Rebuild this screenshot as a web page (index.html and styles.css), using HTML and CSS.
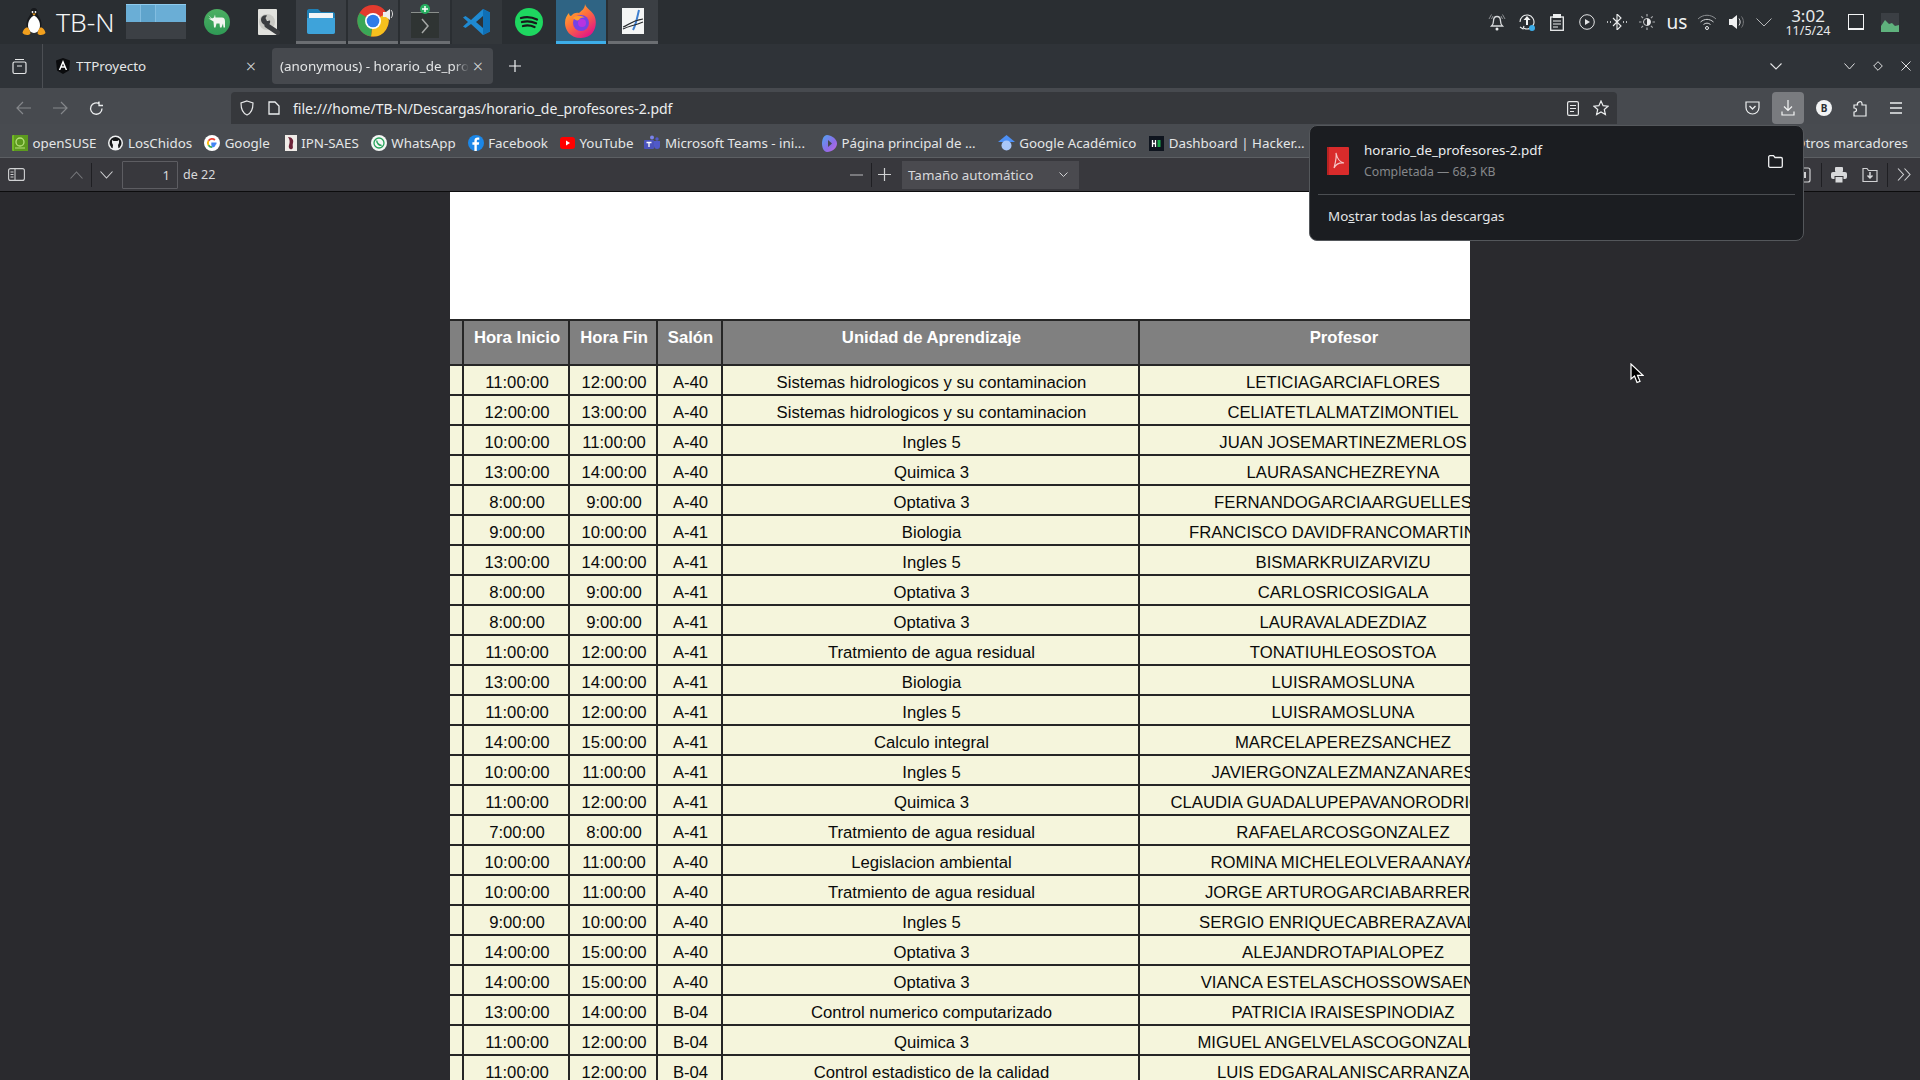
FILE: index.html
```html
<!DOCTYPE html>
<html lang="es">
<head>
<meta charset="utf-8">
<title>horario_de_profesores-2.pdf</title>
<link rel="stylesheet" href="styles.css">
</head>
<body>
<div class="screen">
  <header class="taskbar">
    <div class="launcher">
      <svg width="24" height="30" viewBox="0 0 24 30"><path d="M12 1C9.500 1 8.300 3 8.500 5.500c.1 2-.8 3-2.300 5.500C4.500 14 4 17.500 5 20.500h14c1-3 .5-6.500-1.200-9.500-1.500-2.500-2.400-3.500-2.300-5.500C15.700 3 14.500 1 12 1z" fill="#17191c"/><path d="M12 8.500c-3.300 1.500-6 5.500-6 10 0 3.800 2.500 7.500 6 7.500s6-3.700 6-7.500c0-4.500-2.700-8.500-6-10z" fill="#fff"/><circle cx="10.500" cy="5" r=".9" fill="#fff"/><circle cx="13.500" cy="5" r=".9" fill="#fff"/><path d="M10 6.500h4l-2 2z" fill="#f2a01e"/><path d="M.5 26c.5-3 3-6 5-5.500 1.500.5 2.500 3.500 3 6-2 2.500-6.500 1.500-8-.5zM23.500 26c-.5-3-3-6-5-5.500-1.500.5-2.500 3.500-3 6 2 2.500 6.500 1.500 8-.5z" fill="#f2a01e"/></svg>
      <span class="launcher-name">TB-N</span>
    </div>
    <div class="pager">
      <div class="pager-top"><i class="desk d1"></i><i class="desk d2"></i><i class="desk d3"></i></div>
      <div class="pager-bottom"></div>
    </div>
    <div class="task-list">
      <div class="task">
        <svg width="26" height="26" viewBox="0 0 26 26"><defs><linearGradient id="mn" x1="0" y1="0" x2="0" y2="1"><stop offset="0" stop-color="#4caf62"/><stop offset="1" stop-color="#2f9a55"/></linearGradient></defs><circle cx="13" cy="13" r="13" fill="url(#mn)"/><path d="M4 6l4 3.500 2-1 1-3 .5 3H18c2 0 3 1.500 3 4v6h-1.500l-.5-4-1.500 4H16l-.5-4h-3l-1 4H10l-.5-6L7 11 4.500 9.500 7 9.500z" fill="#f1f5f0"/></svg>
      </div>
      <div class="task">
        <svg width="26" height="28" viewBox="0 0 26 28"><rect x="2" y="1" width="19" height="26" rx="1" fill="#e2e2de"/><circle cx="11" cy="14" r="8" fill="#c9c9c4"/><circle cx="11" cy="14" r="2" fill="#e8e8e5"/><path d="M11 17.500L21.500 24.500" stroke="#3b3d40" stroke-width="5" stroke-linecap="round"/><path d="M5 11.500c0 3.500 3 6 6.500 5.500 2.500-.5 3-2.500 2.500-4.500l-3 .5-1.500-3 1.500-2.500c-3-1-6 1-6 4z" fill="#3b3d40"/></svg>
      </div>
      <div class="task tile">
        <svg width="30" height="26" viewBox="0 0 30 26"><path d="M1 3c0-1 1-2 2-2h9l3 3h12c1 0 2 1 2 2v18c0 1-1 2-2 2H3c-1 0-2-1-2-2z" fill="#1f7fb4"/><rect x="3" y="5" width="24" height="6" fill="#f2f5f7"/><path d="M1 10h28v14c0 1-1 2-2 2H3c-1 0-2-1-2-2z" fill="#3ea3da"/></svg>
      </div>
      <div class="task tile">
        <svg class="chrome" width="38" height="32" viewBox="0 0 38 32"><circle cx="16" cy="16" r="15.500" fill="#e33b2e"/><path d="M16 16L29.500 8.200A15.500 15.500 0 0 1 14 31.400z" fill="#f6c01e"/><path d="M16 16L14 31.400A15.500 15.500 0 0 1 2.500 8z" fill="#3aa757"/><path d="M2.500 8A15.500 15.500 0 0 1 29.500 8L16 8z" fill="#e33b2e"/><circle cx="16" cy="16" r="8" fill="#fff"/><circle cx="16" cy="16" r="6.300" fill="#2f7be8"/><path d="M26 7h3l4-3v11l-4-3h-3z" fill="#eee"/><path d="M34 5c2 2 2 6 0 8" fill="none" stroke="#ddd"/></svg>
      </div>
      <div class="task tile">
        <svg class="term" width="30" height="34" viewBox="0 0 30 34"><rect x="1" y="8" width="28" height="28" fill="#2f3433"/><rect x="1" y="8" width="28" height="1" fill="#8a8f8c"/><path d="M12 15l6 7-6 7" fill="none" stroke="#a5a8a6" stroke-width="1.500"/><circle cx="15" cy="5" r="5" fill="#27ae60"/><path d="M15 2v6M12 5h6" stroke="#fff" stroke-width="1.500"/></svg>
      </div>
      <div class="task tile-plain">
        <svg width="28" height="28" viewBox="0 0 28 28"><path d="M20 1l7 3.500v19L20 27 8 16l-5.500 4L0 18.500 5 14 0 9.500 2.500 8 8 12z" fill="#1f8ad2"/><path d="M20 8l-7 6 7 6z" fill="#2e3236"/><path d="M20 1l7 3.500v19L20 27z" fill="#0f6fb5"/></svg>
      </div>
      <div class="task">
        <svg width="28" height="28" viewBox="0 0 28 28"><circle cx="14" cy="14" r="14" fill="#1ed760"/><path d="M6 10c5-1.500 11-1 16 1.500M7 14c4.500-1.200 9.500-.8 14 1.300M8 18c4-1 8-.6 11.500 1" fill="none" stroke="#17191b" stroke-width="2.300" stroke-linecap="round"/></svg>
      </div>
      <div class="task tile-active">
        <svg width="32" height="34" viewBox="0 0 32 34"><defs><linearGradient id="fx" x1="0" y1="0" x2="0.700" y2="1"><stop offset="0" stop-color="#ffc62c"/><stop offset=".5" stop-color="#ff7139"/><stop offset="1" stop-color="#e31587"/></linearGradient></defs><path d="M20 0c1 4 6 6 9 11 4 7 2 23-13 23C5 34 0 26 0 19c0-5 2-8 4-10 0 2 1 3 2 3 2-3 6-4 8-3 2-2 6-4 6-9z" fill="url(#fx)"/><circle cx="16" cy="19" r="8" fill="#7542e5"/><path d="M8 14c3-3 9-3 12 0-3-1-5 0-6 2-2 1-4 0-6-2z" fill="#ff9a2e"/><circle cx="17" cy="19" r="4" fill="#b833e1"/></svg>
      </div>
      <div class="task tile">
        <svg width="22" height="26" viewBox="0 0 22 26"><rect width="22" height="26" fill="#f4f5f5"/><path d="M11 22c3-5 4-12 6-20" fill="none" stroke="#3f7fd0" stroke-width="2"/><path d="M1 19c5-1 7-6 20-8M1 21c6-3 10-3 20-7" fill="none" stroke="#26292c" stroke-width="1.200"/></svg>
      </div>
    </div>
    <div class="tray">
      <div class="tray-item"><svg width="18" height="18" viewBox="0 0 18 18"><path d="M9 3.500c2.500 0 3.500 2 3.500 4.500 0 3 1 4 2 5h-11c1-1 2-2 2-5 0-2.500 1-4.500 3.500-4.500z" fill="none" stroke="#d8dadc" stroke-width="1.300"/><circle cx="9" cy="16" r="1.500" fill="#e8e9ea"/><path d="M1 6l2.500-4.500M17 6l-2.500-4.500M3.500 6L5 3M14.500 6L13 3" stroke="#8c8f92"/></svg></div>
      <div class="tray-item"><svg width="18" height="18" viewBox="0 0 18 18"><path d="M2 9a7 7 0 1 1 4 6.300M2 14l3 2 1-3" fill="none" stroke="#eceeef" stroke-width="1.100"/><path d="M9 3L5.500 7H8v5h2V7h2.500z" fill="#f4f5f5"/><circle cx="14" cy="15" r="3" fill="#3daee9"/></svg></div>
      <div class="tray-item"><svg width="14" height="17" viewBox="0 0 14 17"><rect x=".7" y="3" width="12.600" height="13.300" fill="none" stroke="#eceeef" stroke-width="1.300"/><rect x="3" y="0" width="8" height="4" fill="#eceeef"/><path d="M3 7h8M3 10h8M3 13h5" stroke="#eceeef"/></svg></div>
      <div class="tray-item"><svg width="16" height="16" viewBox="0 0 16 16"><circle cx="8" cy="8" r="7.300" fill="none" stroke="#e4e5e6"/><path d="M6 5l5 3-5 3z" fill="#e4e5e6"/></svg></div>
      <div class="tray-item"><svg width="22" height="16" viewBox="0 0 22 16"><path d="M7 4l8 8-4 4V0l4 4-8 8" fill="none" stroke="#eceeef" stroke-width="1.100"/><path d="M1 8h1M4 8h1M17 8h1M20 8h1" stroke="#eceeef" stroke-width="1.300"/></svg></div>
      <div class="tray-item"><svg width="16" height="16" viewBox="0 0 16 16"><circle cx="8" cy="8" r="3.500" fill="#2b2e32" stroke="#d0d2d4"/><path d="M8 4.500a3.500 3.500 0 0 1 0 7z" fill="#e8e9ea"/><path d="M8 0v2.500M8 13.500V16M0 8h2.500M13.500 8H16M2.300 2.300l1.800 1.800M11.900 11.900l1.800 1.800M2.300 13.700l1.800-1.800M11.900 4.100l1.800-1.800" stroke="#a8aaad" stroke-width="1.200"/></svg></div>
      <div class="tray-item tray-lang">us</div>
      <div class="tray-item"><svg width="20" height="16" viewBox="0 0 20 16"><path d="M1 5c5-5 13-5 18 0" fill="none" stroke="#8c8f92"/><path d="M3.500 8c4-3.500 9-3.500 13 0M6.500 10.500c2-1.800 5-1.800 7 0" fill="none" stroke="#d0d2d4"/><circle cx="10" cy="14" r="1.500" fill="none" stroke="#eceeef"/></svg></div>
      <div class="tray-item"><svg width="18" height="16" viewBox="0 0 18 16"><path d="M1 5h3l5-4v14l-5-4H1z" fill="#f0f1f2"/><path d="M11 4.500c1.500 2 1.500 5 0 7" fill="none" stroke="#d8dadc"/><path d="M13.500 2.500c2.500 3 2.500 8 0 11" fill="none" stroke="#77797c"/></svg></div>
      <div class="tray-item tray-more"><svg width="16" height="9" viewBox="0 0 16 9"><path d="M.5.500L8 8 15.500.500" fill="none" stroke="#b5b7b9"/></svg></div>
      <div class="clock"><span class="clock-time">3:02</span><span class="clock-date">11/5/24</span></div>
      <div class="desktop-btn"><span class="desktop-shape"></span></div>
      <div class="graph"><svg width="18" height="19" viewBox="0 0 18 19"><rect width="18" height="19" fill="#3b3f44"/><path d="M0 19V13l4-6 4 4 3-1 3 3 4-1v7z" fill="#5fb27d"/></svg></div>
    </div>
  </header>

  <div class="tabbar">
    <div class="tab-view"><svg width="15" height="17" viewBox="0 0 15 17"><path d="M3 1.500h9M2.500 4h10c.8 0 1.500.7 1.500 1.500v8.500c0 .8-.7 1.500-1.500 1.500h-10c-.8 0-1.500-.7-1.500-1.500V5.500C1 4.700 1.700 4 2.500 4zM5 8h5" fill="none" stroke="#e6e7e8" stroke-width="1.200"/></svg></div>
    <div class="tab">
      <svg width="14" height="16" viewBox="0 0 14 16"><path d="M7 0L0 2.500l1 10L7 16l6-3.500 1-10z" fill="#0b0c0e"/><path d="M7 2L2.800 12h1.600l.9-2.300h3.400l.9 2.300h1.600zM6 8.300L7 5.700l1 2.600z" fill="#fff"/></svg>
      <span class="tab-title">TTProyecto</span>
      <span class="tab-close">×</span>
    </div>
    <div class="tab tab-active">
      <span class="tab-title tab-fade">(anonymous) - horario_de_profesores-2.pdf</span>
      <span class="tab-close">×</span>
    </div>
    <div class="tab-new"><svg width="12" height="12" viewBox="0 0 12 12"><path d="M6 0v12M0 6h12" stroke="#f1f2f3" stroke-width="1.200"/></svg></div>
    <div class="tab-actions">
      <svg class="all-tabs" width="12" height="7" viewBox="0 0 12 7"><path d="M.5.500L6 6 11.500.500" fill="none" stroke="#e6e7e8" stroke-width="1.100"/></svg>
      <svg class="win-min" width="11" height="7" viewBox="0 0 11 7"><path d="M.5.500L5.500 6l5-5.500" fill="none" stroke="#e0e1e2"/></svg>
      <svg class="win-max" width="10" height="10" viewBox="0 0 10 10"><path d="M5 .7L9.300 5 5 9.300.7 5z" fill="none" stroke="#e0e1e2"/></svg>
      <svg class="win-close" width="10" height="10" viewBox="0 0 10 10"><path d="M.5.500l9 9M9.500.500l-9 9" stroke="#e0e1e2"/></svg>
    </div>
  </div>

  <nav class="navbar">
    <div class="nav-btn"><svg width="16" height="14" viewBox="0 0 16 14"><path d="M15 7H1M7 1L1 7l6 6" fill="none" stroke="#85878b" stroke-width="1.200"/></svg></div>
    <div class="nav-btn"><svg width="16" height="14" viewBox="0 0 16 14"><path d="M1 7h14M9 1l6 6-6 6" fill="none" stroke="#85878b" stroke-width="1.200"/></svg></div>
    <div class="nav-btn"><svg width="15" height="15" viewBox="0 0 15 15"><path d="M13 7.500A5.700 5.700 0 1 1 10.500 2.800M10 .5v4h4" fill="none" stroke="#eceeef" stroke-width="1.300"/></svg></div>
    <div class="address">
      <svg class="addr-shield" width="14" height="16" viewBox="0 0 14 16"><path d="M7 1l6 2c0 6-1 10-6 12C2 13 1 9 1 3z" fill="none" stroke="#e6e7e8" stroke-width="1.200"/></svg>
      <svg class="addr-page" width="12" height="14" viewBox="0 0 12 14"><path d="M1 1h6l4 4v8H1z" fill="none" stroke="#eceeef" stroke-width="1.300"/></svg>
      <span class="url">file:///home/TB-N/Descargas/horario_de_profesores-2.pdf</span>
      <svg class="addr-reader" width="12" height="15" viewBox="0 0 12 15"><rect x=".6" y=".6" width="10.800" height="13.800" rx="1.500" fill="none" stroke="#e6e7e8" stroke-width="1.200"/><path d="M3 4.500h6M3 7.500h6M3 10.500h4" stroke="#e6e7e8"/></svg>
      <svg class="addr-star" width="16" height="16" viewBox="0 0 16 16"><path d="M8 1l2.100 4.700 5 .5-3.800 3.300 1.100 5L8 12l-4.400 2.500 1.100-5L.9 6.200l5-.5z" fill="none" stroke="#eceeef" stroke-width="1.200"/></svg>
    </div>
    <div class="nav-right">
      <div class="nav-btn"><svg width="15" height="14" viewBox="0 0 15 14"><path d="M1 1h13v5.500a6.500 6.500 0 0 1-13 0z" fill="none" stroke="#eceeef" stroke-width="1.200"/><path d="M4.500 5l3 3 3-3" fill="none" stroke="#eceeef" stroke-width="1.300"/></svg></div>
      <div class="nav-btn nav-btn-on"><svg width="14" height="16" viewBox="0 0 14 16"><path d="M7 0v10M3 6.500L7 10.500l4-4M1 11.500v3.500h12v-3.500" fill="none" stroke="#f4f5f5" stroke-width="1.200"/></svg></div>
      <div class="nav-btn"><span class="ext-b">B</span></div>
      <div class="nav-btn"><svg width="14" height="17" viewBox="0 0 14 17"><path d="M1 5h3.500c-1-3 4-5 4.500-1.500V5h4v11H1v-4c2 0 2.500-1 2.500-2S3 8 1 8z" fill="none" stroke="#eceeef" stroke-width="1.200"/></svg></div>
      <div class="nav-btn"><svg width="14" height="12" viewBox="0 0 14 12"><path d="M1 1h12M1 6h12M1 11h12" stroke="#eceeef" stroke-width="1.300"/></svg></div>
    </div>
  </nav>

  <div class="bookmarks">
    <a class="bm"><svg width="16" height="16" viewBox="0 0 16 16"><rect width="16" height="16" rx="1" fill="#73ba25"/><path d="M2 0h14v16H2z" fill="#5c9a1e"/><circle cx="8" cy="7" r="4" fill="none" stroke="#b5e07a" stroke-width="1.300"/><path d="M3 13h10" stroke="#b5e07a"/></svg><span>openSUSE</span></a>
    <a class="bm bm-chidos"><svg width="15" height="16" viewBox="0 0 15 16"><circle cx="7.500" cy="8" r="7.500" fill="#eef0f1"/><circle cx="7.500" cy="8" r="6" fill="#16181a"/><path d="M4 5l1.500 1h4L11 5v3l-1 2 .5 4H4.500L5 10 4 8z" fill="#eef0f1"/></svg><span>LosChidos</span></a>
    <a class="bm bm-google"><svg width="16" height="16" viewBox="0 0 16 16"><circle cx="8" cy="8" r="8" fill="#fff"/><path d="M12.500 8.300H8.200v1.500h2.600c-.4 1.200-1.400 1.900-2.700 1.900" fill="none" stroke="#4285f4" stroke-width="1.800"/><path d="M4.500 5.800A4.200 4.200 0 0 1 10.900 5" fill="none" stroke="#ea4335" stroke-width="1.800"/><path d="M4.500 5.800a4.200 4.200 0 0 0 0 4.400" fill="none" stroke="#fbbc05" stroke-width="1.800"/><path d="M4.500 10.200a4.200 4.200 0 0 0 3.600 2" fill="none" stroke="#34a853" stroke-width="1.800"/></svg><span>Google</span></a>
    <a class="bm bm-ipn"><svg width="12" height="16" viewBox="0 0 12 16"><rect width="12" height="16" fill="#f0ece8"/><path d="M3 2c4 0 6 3 5 6s1 5-1 6-4-1-3-4 1-5-1-8z" fill="#6e2439"/></svg><span>IPN-SAES</span></a>
    <a class="bm bm-whats"><svg width="16" height="16" viewBox="0 0 16 16"><circle cx="8" cy="8" r="8" fill="#f5f7f5"/><circle cx="8" cy="8" r="5" fill="none" stroke="#25a35a" stroke-width="1.300"/><path d="M6 5.500c-1 2 2.500 5.500 4.500 4.500" fill="none" stroke="#25a35a" stroke-width="1.500"/></svg><span>WhatsApp</span></a>
    <a class="bm bm-face"><svg width="16" height="16" viewBox="0 0 16 16"><circle cx="8" cy="8" r="8" fill="#1b87e8"/><path d="M8.800 16V9.700h2l.4-2.400H8.800V6c0-.8.300-1.200 1.200-1.200h1.300V2.600C10.800 2.500 10.200 2.500 9.600 2.500 7.700 2.500 6.400 3.700 6.400 5.700v1.600h-2v2.400h2V16z" fill="#fff"/></svg><span>Facebook</span></a>
    <a class="bm bm-yt"><svg width="15" height="12" viewBox="0 0 15 12"><rect width="15" height="12" rx="3" fill="#f00"/><path d="M6 3.500l4 2.500-4 2.500z" fill="#fff"/></svg><span>YouTube</span></a>
    <a class="bm bm-teams"><svg width="16" height="16" viewBox="0 0 16 16"><circle cx="8" cy="2.500" r="2" fill="#7b83eb"/><circle cx="13" cy="4" r="1.700" fill="#5059c9"/><path d="M10 6h6v5c0 2-1 3-3 3-1.500 0-3-1-3-3z" fill="#5059c9"/><rect x="0" y="5" width="10" height="9" rx="1" fill="#4b53bc"/><path d="M2.500 7.500h5M5 7.500V12" stroke="#fff" stroke-width="1.300"/></svg><span>Microsoft Teams - ini...</span></a>
    <a class="bm bm-pagina"><svg width="15" height="17" viewBox="0 0 15 17"><defs><linearGradient id="cp" x1="0" y1="0" x2="1" y2="1"><stop offset="0" stop-color="#4fa3f0"/><stop offset=".6" stop-color="#8f6be8"/><stop offset="1" stop-color="#c46be0"/></linearGradient></defs><path d="M5 0c4 0 10 4 10 8.500S10 17 5 17C2 17 0 13 0 8.500S2 0 5 0z" fill="url(#cp)"/><path d="M6 5l4 3.500L6 12z" fill="#474a4f"/></svg><span>Página principal de ...</span></a>
    <a class="bm bm-academico"><svg width="17" height="16" viewBox="0 0 17 16"><path d="M8.500 0l8.500 7-8.500 0L0 7z" fill="#4d90f5"/><circle cx="8.500" cy="10.500" r="5" fill="#a8c7fa"/></svg><span>Google Académico</span></a>
    <a class="bm bm-hacker"><svg width="15" height="15" viewBox="0 0 15 15"><rect width="15" height="15" fill="#0e141e"/><path d="M3.500 4v7M6.500 4v7M3.500 7.500h3" stroke="#fff" stroke-width="1.300"/><rect x="8.500" y="4" width="3" height="7" fill="#1ba94c"/></svg><span>Dashboard | Hacker...</span></a>
    <a class="bm-otros">Otros marcadores</a>
  </div>

  <div class="pdf-toolbar">
    <svg class="pdf-sidebar" width="17" height="13" viewBox="0 0 17 13"><rect x=".6" y=".6" width="15.800" height="11.800" rx="2" fill="none" stroke="#d0d1d3" stroke-width="1.100"/><path d="M7 .6v11.800M2.500 4h3M2.500 6.500h3M2.500 9h3" stroke="#d0d1d3"/></svg>
    <svg class="pdf-up" width="13" height="8" viewBox="0 0 13 8"><path d="M.5 7.500l6-6.500 6 6.500" fill="none" stroke="#77787c" stroke-width="1.100"/></svg>
    <span class="pdf-sep"></span>
    <svg class="pdf-down" width="13" height="8" viewBox="0 0 13 8"><path d="M.5.500L6.500 7l6-6.500" fill="none" stroke="#d0d1d3" stroke-width="1.100"/></svg>
    <div class="page-input">1</div>
    <span class="page-total">de 22</span>
    <svg class="zoom-out" width="13" height="2" viewBox="0 0 13 2"><path d="M0 1h13" stroke="#a5a6a9" stroke-width="1.200"/></svg>
    <span class="pdf-sep zoom-sep"></span>
    <svg class="zoom-in" width="13" height="13" viewBox="0 0 13 13"><path d="M6.500 0v13M0 6.500h13" stroke="#d0d1d3" stroke-width="1.200"/></svg>
    <div class="scale-select"><span>Tamaño automático</span><svg width="9" height="5" viewBox="0 0 9 5"><path d="M.5.500l4 4 4-4" fill="none" stroke="#d0d1d3"/></svg></div>
    <div class="pdf-right">
      <svg width="16" height="16" viewBox="0 0 16 16"><rect x="2" y="1" width="12" height="14" rx="2" fill="none" stroke="#d0d1d3" stroke-width="1.200"/><rect x="6" y="5" width="4" height="6" fill="#d0d1d3"/></svg>
      <span class="pdf-sep right-sep"></span>
      <svg class="pdf-print" width="16" height="16" viewBox="0 0 16 16"><rect x="4" y="0" width="8" height="5" rx="1" fill="#d8d9db"/><rect x="0" y="5" width="16" height="7" rx="2" fill="#d8d9db"/><rect x="4" y="9.500" width="8" height="6.500" fill="#d8d9db" stroke="#38383d"/></svg>
      <svg class="pdf-save" width="16" height="16" viewBox="0 0 16 16"><path d="M1 1.500h4l1.500 2H15v11H1z" fill="none" stroke="#d0d1d3" stroke-width="1.200"/><path d="M8 5v6M5.500 8.500L8 11l2.500-2.500" fill="none" stroke="#d8d9db" stroke-width="1.500"/></svg>
      <span class="pdf-sep right-sep2"></span>
      <svg class="pdf-more" width="14" height="13" viewBox="0 0 14 13"><path d="M1 .5l5.500 6L1 12.500M7.500 .5l5.500 6-5.500 6" fill="none" stroke="#d0d1d3" stroke-width="1.100"/></svg>
    </div>
  </div>

  <main class="viewer">
    <div class="page">
      <table class="horario">
        <colgroup>
          <col class="c0"><col class="c1"><col class="c2"><col class="c3"><col class="c4"><col class="c5">
        </colgroup>
        <thead>
          <tr><th></th><th>Hora Inicio</th><th>Hora Fin</th><th>Salón</th><th>Unidad de Aprendizaje</th><th>Profesor</th></tr>
        </thead>
        <tbody>
          <tr><td></td><td>11:00:00</td><td>12:00:00</td><td>A-40</td><td>Sistemas hidrologicos y su contaminacion</td><td>LETICIAGARCIAFLORES</td></tr>
          <tr><td></td><td>12:00:00</td><td>13:00:00</td><td>A-40</td><td>Sistemas hidrologicos y su contaminacion</td><td>CELIATETLALMATZIMONTIEL</td></tr>
          <tr><td></td><td>10:00:00</td><td>11:00:00</td><td>A-40</td><td>Ingles 5</td><td>JUAN JOSEMARTINEZMERLOS</td></tr>
          <tr><td></td><td>13:00:00</td><td>14:00:00</td><td>A-40</td><td>Quimica 3</td><td>LAURASANCHEZREYNA</td></tr>
          <tr><td></td><td>8:00:00</td><td>9:00:00</td><td>A-40</td><td>Optativa 3</td><td>FERNANDOGARCIAARGUELLES</td></tr>
          <tr><td></td><td>9:00:00</td><td>10:00:00</td><td>A-41</td><td>Biologia</td><td>FRANCISCO DAVIDFRANCOMARTINEZ</td></tr>
          <tr><td></td><td>13:00:00</td><td>14:00:00</td><td>A-41</td><td>Ingles 5</td><td>BISMARKRUIZARVIZU</td></tr>
          <tr><td></td><td>8:00:00</td><td>9:00:00</td><td>A-41</td><td>Optativa 3</td><td>CARLOSRICOSIGALA</td></tr>
          <tr><td></td><td>8:00:00</td><td>9:00:00</td><td>A-41</td><td>Optativa 3</td><td>LAURAVALADEZDIAZ</td></tr>
          <tr><td></td><td>11:00:00</td><td>12:00:00</td><td>A-41</td><td>Tratmiento de agua residual</td><td>TONATIUHLEOSOSTOA</td></tr>
          <tr><td></td><td>13:00:00</td><td>14:00:00</td><td>A-41</td><td>Biologia</td><td>LUISRAMOSLUNA</td></tr>
          <tr><td></td><td>11:00:00</td><td>12:00:00</td><td>A-41</td><td>Ingles 5</td><td>LUISRAMOSLUNA</td></tr>
          <tr><td></td><td>14:00:00</td><td>15:00:00</td><td>A-41</td><td>Calculo integral</td><td>MARCELAPEREZSANCHEZ</td></tr>
          <tr><td></td><td>10:00:00</td><td>11:00:00</td><td>A-41</td><td>Ingles 5</td><td>JAVIERGONZALEZMANZANARES</td></tr>
          <tr><td></td><td>11:00:00</td><td>12:00:00</td><td>A-41</td><td>Quimica 3</td><td>CLAUDIA GUADALUPEPAVANORODRIGUEZ</td></tr>
          <tr><td></td><td>7:00:00</td><td>8:00:00</td><td>A-41</td><td>Tratmiento de agua residual</td><td>RAFAELARCOSGONZALEZ</td></tr>
          <tr><td></td><td>10:00:00</td><td>11:00:00</td><td>A-40</td><td>Legislacion ambiental</td><td>ROMINA MICHELEOLVERAANAYA</td></tr>
          <tr><td></td><td>10:00:00</td><td>11:00:00</td><td>A-40</td><td>Tratmiento de agua residual</td><td>JORGE ARTUROGARCIABARRERA</td></tr>
          <tr><td></td><td>9:00:00</td><td>10:00:00</td><td>A-40</td><td>Ingles 5</td><td>SERGIO ENRIQUECABRERAZAVALA</td></tr>
          <tr><td></td><td>14:00:00</td><td>15:00:00</td><td>A-40</td><td>Optativa 3</td><td>ALEJANDROTAPIALOPEZ</td></tr>
          <tr><td></td><td>14:00:00</td><td>15:00:00</td><td>A-40</td><td>Optativa 3</td><td>VIANCA ESTELASCHOSSOWSAENZ</td></tr>
          <tr><td></td><td>13:00:00</td><td>14:00:00</td><td>B-04</td><td>Control numerico computarizado</td><td>PATRICIA IRAISESPINODIAZ</td></tr>
          <tr><td></td><td>11:00:00</td><td>12:00:00</td><td>B-04</td><td>Quimica 3</td><td>MIGUEL ANGELVELASCOGONZALEZ</td></tr>
          <tr><td></td><td>11:00:00</td><td>12:00:00</td><td>B-04</td><td>Control estadistico de la calidad</td><td>LUIS EDGARALANISCARRANZA</td></tr>
        </tbody>
      </table>
    </div>
  </main>

  <aside class="downloads">
    <div class="dl-item">
      <svg class="dl-icon" width="22" height="28" viewBox="0 0 22 28"><rect width="22" height="28" rx="1" fill="#d92b2b"/><rect width="2" height="28" fill="#b82222"/><path d="M9 6c1 5 3 9 8 10-4-.5-8 1-10 5 1-4 3-11 2-15z" fill="none" stroke="#f5c6c6" stroke-width="1.200"/></svg>
      <div class="dl-text">
        <div class="dl-name">horario_de_profesores-2.pdf</div>
        <div class="dl-status">Completada — 68,3 KB</div>
      </div>
      <svg class="dl-folder" width="15" height="13" viewBox="0 0 15 13"><path d="M.7 2c0-.7.5-1.300 1.300-1.300h3.500L7 2.500h6c.7 0 1.300.5 1.300 1.300V11c0 .7-.6 1.300-1.300 1.300H2c-.8 0-1.300-.6-1.300-1.300z" fill="none" stroke="#f0f1f2" stroke-width="1.300"/></svg>
    </div>
    <div class="dl-all">Mo<u>s</u>trar todas las descargas</div>
  </aside>

  <svg class="cursor" width="14" height="21" viewBox="0 0 14 21"><path d="M1 1v15l3.500-3 2.500 6.500 3-1.200-2.500-6H13z" fill="#000" stroke="#fff" stroke-width="1.200"/></svg>
</div>
</body>
</html>
```

FILE: styles.css
```css
* { box-sizing: border-box; }
html, body { margin: 0; padding: 0; height: 100%; overflow: hidden; }
body { font-family: "Noto Sans", sans-serif; color: #eceeef; background: #2a2a2e; }
.screen { position: relative; width: 1920px; height: 1080px; display: flex; flex-direction: column; overflow: hidden; }

.taskbar { flex: 0 0 44px; height: 44px; background: #2a2e32; display: flex; align-items: stretch; }
.launcher { width: 126px; padding-left: 22px; display: flex; align-items: center; gap: 10px; }
.launcher-name { font-size: 26.500px; font-weight: 300; color: #f3f5f6; }
.pager { width: 60px; height: 35px; margin: 4px 0 0 0; background: #3c4045; display: flex; flex-direction: column; }
.pager-top { height: 18px; display: flex; background: #6aaed6; border-top: 1px solid #8ecbee; }
.desk { display: block; }
.d1 { width: 15px; border-right: 1px solid #82bde0; }
.d2 { width: 15px; background: #5fa4cc; border-right: 1px solid #82bde0; }
.d3 { flex: 1; }
.pager-bottom { flex: 1; }
.task-list { margin-left: 6px; display: flex; gap: 2px; }
.task { width: 50px; height: 44px; display: flex; align-items: center; justify-content: center; }
.tile { background: #3b3f44; border-bottom: 3px solid #6b6e72; }
.tile-plain { background: #33373b; }
.tile-active { background: #2f6484; border-bottom: 3px solid #3daee9; }
.chrome { margin-left: 5px; }
.tray { margin-left: auto; display: flex; align-items: center; padding-right: 18px; }
.tray-item { width: 30px; height: 44px; display: flex; align-items: center; justify-content: center; }
.tray-more { margin-left: -3px; margin-right: 3px; }
.tray-lang { font-size: 19px; line-height: 1; color: #f0f1f2; }
.clock { width: 52px; padding-top: 1px; display: flex; flex-direction: column; align-items: center; line-height: 1; color: #e8eaeb; }
.clock-time { font-size: 17px; margin-bottom: 1px; }
.clock-date { font-size: 12.500px; }
.desktop-btn { width: 44px; display: flex; justify-content: center; }
.desktop-shape { width: 16px; height: 16px; border: 1px solid #f2f3f4; border-bottom-width: 2px; }
.graph { width: 24px; display: flex; justify-content: center; }

.tabbar { flex: 0 0 44px; background: #2f3338; display: flex; align-items: center; padding: 0; }
.tab-view { width: 43px; height: 44px; padding-right: 3px; border-right: 1px solid #4c4f54; display: flex; align-items: center; justify-content: center; }
.tab { width: 224px; margin-left: 1px; height: 36px; display: flex; align-items: center; padding: 0 12px 0 12px; gap: 6px; font-size: 13.400px; }
.tab-active { width: 221px; margin-left: 4px; padding: 0 10px 0 8px; gap: 4px; background: #46494e; border-radius: 4px; }
.tab-title { flex: 1; white-space: nowrap; overflow: hidden; color: #e4e6e7; }
.tab-fade { -webkit-mask-image: linear-gradient(to right, #000 92%, transparent 100%); mask-image: linear-gradient(to right, #000 92%, transparent 100%); }
.tab-close { font-size: 18px; line-height: 1; color: #d8dadc; font-weight: 300; }
.tab-new { width: 44px; display: flex; justify-content: center; }
.tab-actions { margin-left: auto; display: flex; align-items: center; padding-right: 9px; }
.all-tabs { margin-right: 62px; }
.win-min { margin-right: 18px; }
.win-max { margin-right: 18px; }

.navbar { flex: 0 0 36px; background: #474a4f; display: flex; align-items: flex-end; padding-left: 6px; }
.nav-btn { width: 36px; height: 32px; display: flex; align-items: center; justify-content: center; }
.nav-btn-on { background: #797b7f; width: 32px; margin: 0 2px; border-radius: 4px; }
.address { margin-left: 117px; width: 1386px; height: 32px; background: #36383c; border-radius: 4px 4px 0 0; display: flex; align-items: center; padding-left: 9px; font-size: 14px; }
.addr-shield { margin-right: 14px; }
.addr-page { margin-right: 13px; }
.url { flex: 1; color: #eceeef; white-space: nowrap; }
.addr-reader { margin-right: 14px; }
.addr-star { margin-right: 8px; }
.nav-right { margin-left: 117px; display: flex; }
.ext-b { width: 16px; height: 16px; border-radius: 50%; background: #f2f3f4; color: #2a2e32; font-size: 10px; font-weight: 700; display: flex; align-items: center; justify-content: center; }

.bookmarks { flex: 0 0 34px; background: #484b50; border-bottom: 1px solid #5c5f63; display: flex; align-items: center; padding: 5px 0 0 12px; font-size: 13.350px; white-space: nowrap; }
.bm { display: flex; align-items: center; gap: 4.500px; color: #e4e6e7; margin-right: 12px; }
.bm-ipn { margin-left: 3px; }
.bm-teams { margin-left: -1px; }
.bm-pagina { margin-left: 5px; }
.bm-academico { margin-left: 10px; }
.bm-hacker { margin-left: 1px; }
.bm-otros { margin-left: auto; margin-right: 12px; color: #e4e6e7; }

.pdf-toolbar { flex: 0 0 34px; background: #38383d; border-bottom: 1px solid #0c0c0d; display: flex; align-items: center; font-size: 12.500px; color: #d8d9db; padding-left: 8px; }
.pdf-sidebar { margin-right: 45px; }
.pdf-sep { width: 1px; height: 24px; background: #1f1f23; }
.pdf-up { margin-right: 8px; }
.pdf-down { margin: 0 9px 0 8px; }
.page-input { width: 56px; height: 28px; border: 1px solid #5d5d62; border-radius: 1px; text-align: right; padding-right: 7px; line-height: 27px; font-size: 13px; }
.page-total { margin-left: 5px; width: 60px; }
.zoom-out { margin-left: 607px; margin-right: 8px; }
.zoom-sep { margin-right: 6px; }
.scale-select { margin-left: 11px; width: 177px; height: 28px; background: #4a4a4f; display: flex; align-items: center; justify-content: space-between; padding: 0 11px 0 6px; font-size: 13.400px; }
.pdf-right { margin-left: auto; display: flex; align-items: center; padding-right: 9px; }
.right-sep { margin: 0 9px; }
.pdf-print { margin-right: 15px; }
.right-sep2 { margin: 0 9px; }

.viewer { flex: 1; background: #2a2a2e; min-height: 0; overflow: hidden; }
.page { width: 1020px; height: 100%; margin: 0 auto; background: #fff; overflow: hidden; padding-top: 127px; }
.horario { width: 1098px; table-layout: fixed; border-collapse: separate; border-spacing: 0; font-family: "Liberation Sans", Arial, sans-serif; font-size: 16.700px; color: #0a0a0a; }
.c0 { width: 14px; } .c1 { width: 106px; } .c2 { width: 88px; } .c3 { width: 65px; } .c4 { width: 417px; } .c5 { width: 408px; }
.horario th { height: 47px; background: #808080; color: #fff; font-weight: 700; vertical-align: top; padding: 7px 0 0 2px; border-top: 2px solid #262626; border-bottom: 2px solid #262626; border-right: 2px solid #262626; line-height: 20px; }
.horario td { height: 30px; background: #f5f5dc; padding: 6px 0 0 2px; text-align: center; white-space: nowrap; border-bottom: 2px solid #262626; border-right: 2px solid #262626; line-height: 22px; }
.horario td:last-child { padding-left: 0; }

.downloads { position: absolute; left: 1309px; top: 125px; width: 495px; height: 116px; background: #1b1d21; border: 1px solid #54575b; border-radius: 8px; }
.dl-item { height: 68px; padding: 2px 20px 0 17px; display: flex; align-items: center; }
.dl-icon { margin-right: 15px; }
.dl-text { flex: 1; }
.dl-name { font-size: 13.400px; line-height: 20px; color: #eceeef; }
.dl-status { font-size: 12.250px; line-height: 20px; margin-top: 2px; color: #85878a; }
.dl-all { margin: 0 8px; border-top: 1px solid #4b4e52; padding: 11px 10px; font-size: 13.400px; line-height: 20px; color: #e4e6e7; }

.cursor { position: absolute; left: 1630px; top: 363px; }
```
